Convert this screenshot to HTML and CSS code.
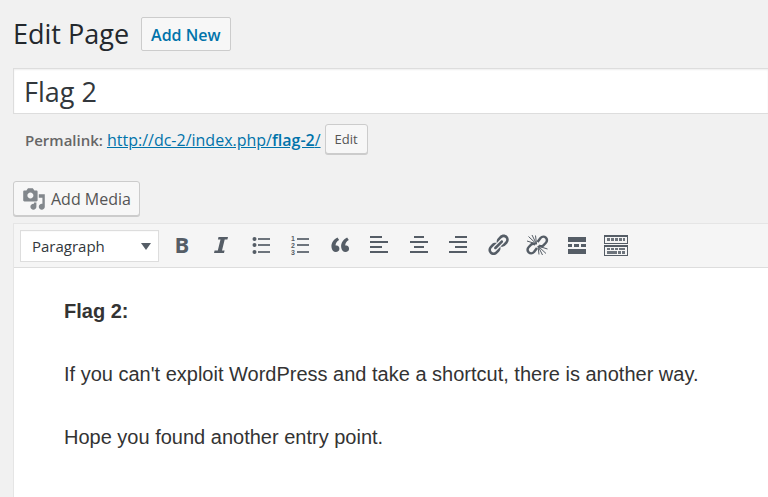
FILE: index.html
```html
<!DOCTYPE html>
<html lang="en">
<head>
<meta charset="utf-8">
<title>Edit Page</title>
<link rel="stylesheet" href="styles.css">
</head>
<body>
<main class="page">
  <header class="heading">
    <h1>Edit Page</h1>
    <a class="add-new" href="#">Add New</a>
  </header>
  <input class="title" type="text" value="Flag 2" aria-label="Title">
  <div class="permalink">
    <strong>Permalink:</strong>
    <a href="#">http://dc-2/index.php/<b>flag-2</b>/</a>
    <button class="button small" type="button">Edit</button>
  </div>
  <div class="media-row">
    <button class="button media" type="button">
      <svg viewBox="0 0 20 20" aria-hidden="true"><path d="M13 11V4c0-.55-.45-1-1-1h-1.67L9 1H5L3.67 3H2c-.55 0-1 .45-1 1v7c0 .55.45 1 1 1h10c.55 0 1-.45 1-1zM7 4.5c1.38 0 2.5 1.12 2.5 2.5S8.38 9.5 7 9.5 4.5 8.38 4.5 7 5.62 4.5 7 4.5zM14 6h5v10.5c0 1.38-1.12 2.5-2.5 2.5S14 17.88 14 16.5s1.12-2.5 2.5-2.5c.17 0 .34.02.5.05V9h-3V6zm-4 8.05V13h2v3.5c0 1.38-1.12 2.5-2.5 2.5S7 17.88 7 16.5 8.12 14 9.5 14c.17 0 .34.02.5.05z"/></svg>
      Add Media
    </button>
  </div>
  <section class="editor">
    <div class="toolbar">
      <div class="format">
        <select aria-label="Format"><option>Paragraph</option><option>Heading 1</option></select>
        <svg viewBox="0 0 10 8" aria-hidden="true"><path d="M0 0h10L5 7z"/></svg>
      </div>
      <div class="tools">
        <button type="button" aria-label="Bold"><b class="bold">B</b></button>
        <button type="button" aria-label="Italic"><svg viewBox="0 0 24 24"><path d="M9.500 3H19l-.6 2.500h-2.700L13 16.500h2.600L15 19H5l.6-2.500h3.200L11.500 5.500H8.900z"/></svg></button>
        <button type="button" aria-label="Bulleted list"><svg viewBox="0 0 24 24"><circle cx="5.500" cy="5" r="2"/><circle cx="5.500" cy="11" r="2"/><circle cx="5.500" cy="18" r="2"/><path d="M9 4h12v2H9zM9 10h12v2H9zM9 17h12v2H9z" opacity=".85"/></svg></button>
        <button type="button" aria-label="Numbered list"><svg viewBox="0 0 24 24"><text x="3" y="7">1</text><text x="3" y="14">2</text><text x="3" y="21">3</text><path d="M9 4h12v2H9zM9 10h12v2H9zM9 17h12v2H9z" opacity=".85"/></svg></button>
        <button type="button" aria-label="Blockquote"><svg viewBox="0 0 20 20"><path transform="translate(0 -1)" d="M9.49 13.22c0-.74-.2-1.38-.61-1.9-.62-.78-1.83-.88-2.53-.72-.29-1.65 1.11-3.75 2.92-4.65L7.88 4c-2.73 1.3-5.42 4.28-4.96 8.05C3.21 14.43 4.59 16 6.54 16c.85 0 1.56-.25 2.12-.75s.83-1.18.83-2.03zm8.05 0c0-.74-.2-1.38-.61-1.9-.63-.78-1.83-.88-2.53-.72-.29-1.65 1.11-3.75 2.92-4.65L15.93 4c-2.73 1.3-5.41 4.28-4.95 8.05.29 2.38 1.66 3.95 3.61 3.95.85 0 1.56-.25 2.12-.75s.83-1.18.83-2.03z"/></svg></button>
        <button type="button" aria-label="Align left"><svg viewBox="0 0 24 24"><path d="M3 2h12v2H3zM3 7h18v2H3zM3 12h12v2H3zM3 17h18v2H3z"/></svg></button>
        <button type="button" aria-label="Align center"><svg viewBox="0 0 24 24"><path d="M7 2h10v2H7zM3 7h18v2H3zM7 12h10v2H7zM3 17h18v2H3z"/></svg></button>
        <button type="button" aria-label="Align right"><svg viewBox="0 0 24 24"><path d="M9 2h12v2H9zM3 7h18v2H3zM9 12h12v2H9zM3 17h18v2H3z"/></svg></button>
        <button type="button" aria-label="Insert link"><svg viewBox="0 0 20 20"><path transform="translate(0 -1)" d="M17.74 2.76c1.68 1.69 1.68 4.41 0 6.1l-1.53 1.52c-1.12 1.12-2.7 1.47-4.14 1.09l2.62-2.61.76-.77.76-.76c.84-.84.84-2.2 0-3.04-.84-.85-2.2-.85-3.04 0l-.77.76-3.38 3.38c-.37-1.44-.02-3.02 1.1-4.14l1.52-1.53c1.69-1.68 4.42-1.68 6.1 0zM8.59 13.43l5.34-5.34c.42-.42.42-1.1 0-1.52-.44-.43-1.13-.39-1.53 0l-5.33 5.34c-.42.42-.42 1.1 0 1.52.44.43 1.13.39 1.52 0zm-.76 2.29l4.14-4.15c.38 1.44.03 3.02-1.09 4.14l-1.52 1.53c-1.69 1.68-4.41 1.68-6.1 0-1.68-1.68-1.68-4.42 0-6.1l1.53-1.52c1.12-1.12 2.7-1.47 4.14-1.1l-4.14 4.15c-.85.84-.85 2.2 0 3.05.84.84 2.2.84 3.04 0z"/></svg></button>
        <button type="button" aria-label="Remove link"><svg viewBox="0 0 24 24"><path class="ring" d="M12.500 8l3-4c3.500-3.700 8.900 1.200 5.200 5l-2.300 2.300c-1.300 1.300-2.900 1-4.400.2M12 14l-3 4c-3.500 3.700-8.900-1.200-5.200-5l2.300-2.300c1.300-1.300 2.900-1 4.400-.2"/><path class="rays" d="M11.500 10L2 7M11.500 10L3.500 2.500M11.500 10L7 1M11.500 10L10.500 1.500M13 12L22.500 15M13 12L21 19.500M13 12L17.500 21M13 12L14 20.500"/></svg></button>
        <button type="button" aria-label="Read more"><svg viewBox="0 0 24 24"><path d="M3 3h18v5H3zM3 10h4v3H3zM9 10h5v3H9zM16 10h5v3h-5zM3 15h18v5H3z"/></svg></button>
        <button type="button" aria-label="Toolbar toggle"><svg viewBox="0 0 24 24"><path fill-rule="evenodd" d="M0 1h24v9H0zM1 3v6h22V3zM0 11h24v11H0zM1 13v8h22v-8z"/><path d="M3 4h3v3H3zM7 4h3v3H7zM11 4h3v3h-3zM15 4h3v3h-3zM19 4h2v3h-2zM3 14h3v2H3zM7 14h3v2H7zM11 14h3v2h-3zM15 14h6v2h-6zM3 17h10v3H3zM14 17h3v3h-3zM18 17h3v3h-3z" opacity=".85"/></svg></button>
      </div>
    </div>
    <div class="content" contenteditable="true" spellcheck="false" role="textbox" aria-label="Page content">
      <p><strong>Flag 2:</strong></p>
      <p>If you can't exploit WordPress and take a shortcut, there is another way.</p>
      <p>Hope you found another entry point.</p>
    </div>
  </section>
</main>
</body>
</html>
```
FILE: styles.css
```css
* { box-sizing: border-box; }
body {
  margin: 0;
  background: #f1f1f1;
  color: #23282d;
  font: 16px/24px "Open Sans", "Noto Sans", sans-serif;
}
.page {
  display: flex;
  flex-direction: column;
  min-height: 100vh;
  padding: 17px 0 0 13px;
}
a { color: #0073aa; }
button, input, select { font: inherit; margin: 0; }
.heading {
  display: flex;
  align-items: center;
  gap: 12px;
  height: 34px;
}
h1 { margin: 0; font-size: 27px; line-height: 34px; font-weight: 400; }
.add-new {
  padding: 5px 9px 3px;
  border: 1px solid #ccc;
  border-radius: 2px;
  background: #f7f7f7;
  font-weight: 600;
  text-decoration: none;
}
.title {
  width: 100%;
  height: 46px;
  margin-top: 17px;
  padding: 0 10px;
  border: 1px solid #ddd;
  border-right: 0;
  border-radius: 0;
  background: #fff;
  box-shadow: inset 0 1px 2px rgba(0, 0, 0, .07);
  color: #32373c;
  font-size: 27px;
}
.permalink {
  display: flex;
  align-items: center;
  gap: 4px;
  height: 32px;
  margin-top: 10px;
  padding-left: 12px;
}
.permalink strong { color: #666; font-size: 15px; font-weight: 600; }
.permalink b { font-weight: 600; }
.button {
  border: 1px solid #ccc;
  border-radius: 3px;
  background: #f7f7f7;
  box-shadow: 0 1px 0 #ccc;
  color: #555;
}
.small { align-self: flex-start; height: 30px; padding: 0 9px; font-size: 13px; }
.media-row { display: flex; margin-top: 25px; }
.media {
  display: flex;
  align-items: center;
  gap: 5px;
  height: 35px;
  padding: 0 8px;
}
.media svg { width: 24px; height: 24px; fill: #82878c; }
.editor {
  display: flex;
  flex: 1;
  flex-direction: column;
  margin-top: 7px;
  border: 1px solid #e5e5e5;
  border-width: 1px 0 0 1px;
  background: #fff;
}
.toolbar {
  display: flex;
  align-items: center;
  gap: 11px;
  height: 44px;
  padding-left: 6px;
  border-bottom: 1px solid #ddd;
  background: #f5f5f5;
}
.format { position: relative; width: 139px; }
.format select {
  display: block;
  width: 100%;
  height: 32px;
  padding: 0 11px;
  appearance: none;
  border: 1px solid #ddd;
  border-radius: 0;
  background: #fff;
  box-shadow: inset 0 1px 1px -1px rgba(0, 0, 0, .2);
  color: #32373c;
  font-size: 15px;
}
.format svg {
  position: absolute;
  top: 13px;
  right: 8px;
  width: 10px;
  height: 8px;
  fill: #555d66;
  pointer-events: none;
}
.tools { display: flex; justify-content: space-between; width: 458px; }
.tools button {
  display: flex;
  align-items: center;
  justify-content: center;
  width: 24px;
  height: 24px;
  padding: 0;
  border: 0;
  background: none;
  color: #555d66;
}
.tools svg { width: 24px; height: 24px; fill: #555d66; }
.tools text { font: bold 7px "Liberation Sans", sans-serif; }
.tools .rays { stroke: #555d66; stroke-width: 1; fill: none; }
.tools .ring { stroke: #555d66; stroke-width: 2.5; fill: none; }
.bold { font-size: 22px; line-height: 20px; padding-bottom: 4px; font-weight: 700; }
.content {
  flex: 1;
  padding: 28px 50px 0 50px;
  outline: 0;
  color: #333;
  font: 20px/31px "Liberation Sans", Arial, sans-serif;
}
.content p { margin: 0 0 32px; }
```
